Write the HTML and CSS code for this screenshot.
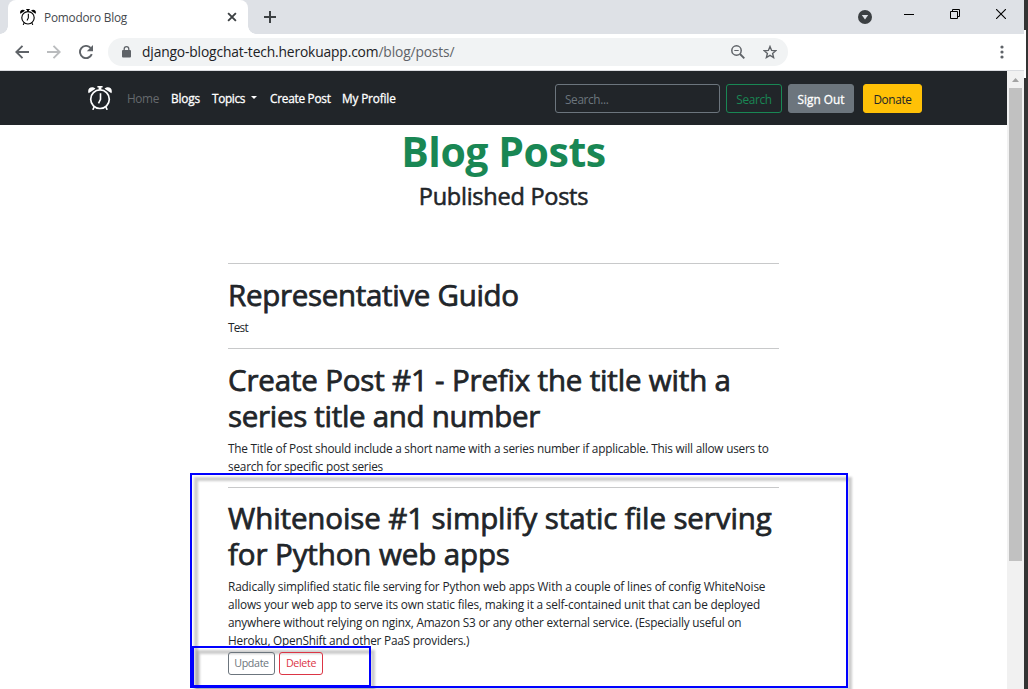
FILE: index.html
```
<!DOCTYPE html>
<html lang="en">
<head>
<meta charset="utf-8">
<title>Pomodoro Blog</title>
<link rel="stylesheet" href="styles.css">
</head>
<body>
<svg width="0" height="0" class="defs">
  <symbol id="clock" viewBox="0 0 24 24">
    <circle cx="12" cy="13.2" r="9.3" fill="none" stroke="currentColor" stroke-width="1.7"/>
    <path d="M9.400 0h5.200v1.600h-1.200v2h-2.800v-2H9.400zM.6 7.200C-.8 4 1.400 1.200 4.200 1.300c1.300 0 2.500.6 3.200 1.400zM23.400 7.200c1.400-3.200-.8-6-3.600-5.900-1.300 0-2.500.6-3.200 1.400z" fill="currentColor"/>
    <path d="M12.500 7.300v6l-2 4M6.200 20.800l-1.400 3M17.800 20.800l1.400 3" fill="none" stroke="currentColor" stroke-width="1.600"/>
  </symbol>
</svg>
<div class="screen">
  <div class="browser">
    <div class="tabstrip">
      <div class="tab">
        <svg class="favicon"><use href="#clock"/></svg>
        <span class="tab-title">Pomodoro Blog</span>
        <svg class="tab-close" viewBox="0 0 9 9"><path d="M1 1l7 7M8 1l-7 7" stroke="#3c4043" stroke-width="1.700"/></svg>
      </div>
      <svg class="new-tab" viewBox="0 0 12 12"><path d="M6 0v12M0 6h12" stroke="#3c4043" stroke-width="2"/></svg>
      <div class="window-controls">
        <svg width="14" height="14" viewBox="0 0 14 14"><circle cx="7" cy="7" r="7" fill="#3c4043"/><path d="M3.800 5h6.400L7 9.500z" fill="#dee1e6"/></svg>
        <svg class="minimize" width="10" height="10" viewBox="0 0 10 10"><path d="M0 5.500h10" stroke="#000"/></svg>
        <svg class="restore" width="10" height="10" viewBox="0 0 10 10"><path d="M.5 2.500h7v7h-7zM2.500 2.500v-2h7v7h-2" fill="none" stroke="#000"/></svg>
        <svg class="close" width="10" height="10" viewBox="0 0 10 10"><path d="M0 0l10 10M10 0L0 10" stroke="#000" stroke-width="1.100"/></svg>
      </div>
    </div>
    <div class="toolbar">
      <svg class="back" width="14" height="14" viewBox="0 0 14 14"><path d="M14 7H1.500M7.500 .8L1.300 7l6.200 6.200" fill="none" stroke="#5f6368" stroke-width="1.900"/></svg>
      <svg class="forward" width="14" height="14" viewBox="0 0 14 14"><path d="M0 7h12.500M6.500 .8L12.700 7l-6.200 6.200" fill="none" stroke="#babcbe" stroke-width="1.900"/></svg>
      <svg class="reload" width="14" height="14" viewBox="0 0 14 14"><path d="M12.800 9.200A6.100 6.100 0 1 1 11.600 2.900" fill="none" stroke="#5f6368" stroke-width="1.900"/><path d="M14 0v6.200H7.800z" fill="#5f6368"/></svg>
      <div class="address">
        <svg class="lock" width="9" height="12" viewBox="0 0 9 12"><path d="M2.200 5V3a2.300 2.300 0 0 1 4.600 0v2" fill="none" stroke="#5f6368" stroke-width="1.300"/><rect y="4" width="9" height="7.500" rx="1" fill="#5f6368"/></svg>
        <span class="url">django-blogchat-tech.herokuapp.com<span class="path">/blog/posts/</span></span>
        <svg class="zoom-out" width="14" height="14" viewBox="0 0 14 14"><circle cx="5.500" cy="5.500" r="4.700" fill="none" stroke="#5f6368" stroke-width="1.500"/><path d="M3.300 5.500h4.400" stroke="#5f6368"/><path d="M9 9l4.300 4.300" stroke="#5f6368" stroke-width="1.900"/></svg>
        <svg class="star" width="14" height="14" viewBox="0 0 14 14"><path d="M7 1.500l1.600 3.900 4.200.3-3.200 2.700 1 4.100L7 10.300l-3.600 2.200 1-4.100-3.200-2.700 4.200-.3z" fill="none" stroke="#5f6368" stroke-width="1.400"/></svg>
      </div>
      <svg class="menu" width="4" height="14" viewBox="0 0 4 14"><g fill="#5f6368"><circle cx="2" cy="2" r="1.600"/><circle cx="2" cy="7" r="1.600"/><circle cx="2" cy="12" r="1.600"/></g></svg>
    </div>
    <div class="viewport">
      <div class="page">
        <nav class="navbar">
          <svg class="brand"><use href="#clock"/></svg>
          <a class="link home">Home</a>
          <a class="link blogs">Blogs</a>
          <a class="link topics">Topics</a><i class="caret"></i>
          <a class="link create">Create Post</a>
          <a class="link profile">My Profile</a>
          <div class="actions">
            <div class="search-input">Search...</div>
            <div class="btn search-btn">Search</div>
            <div class="btn signout">Sign Out</div>
            <div class="btn donate">Donate</div>
          </div>
        </nav>
        <header class="heading">
          <h1>Blog Posts</h1>
          <h3>Published Posts</h3>
        </header>
        <main class="posts">
          <article class="post">
            <h2 class="guido">Representative Guido</h2>
            <p class="test">Test</p>
          </article>
          <article class="post">
            <h2>Create Post #1 - Prefix the title with a<br><span class="tight">series title and number</span></h2>
            <p>The Title of Post should include a short name with a series number if applicable. This will allow users to<br>search for specific post series</p>
          </article>
          <article class="post last">
            <h2 class="whitenoise">Whitenoise #1 simplify static file serving<br>for Python web apps</h2>
            <p class="summary">Radically simplified static file serving for Python web apps With a couple of lines of config WhiteNoise<br><span class="line-2">allows your web app to serve its own static files, making it a self-contained unit that can be deployed</span><br><span class="line-3">anywhere without relying on nginx, Amazon S3 or any other external service. (Especially useful on<br>Heroku, OpenShift and other PaaS providers.)</span></p>
            <div class="post-actions">
              <div class="small-btn update">Update</div>
              <div class="small-btn delete">Delete</div>
            </div>
          </article>
        </main>
      </div>
      <div class="scrollbar">
        <svg width="7" height="4" viewBox="0 0 7 4"><path d="M3.500 0L7 4H0z" fill="#a3a3a3"/></svg>
        <div class="thumb"></div>
      </div>
    </div>
  </div>
  <div class="backdrop"><div class="backdrop-gap"></div></div>
  <div class="callout callout-post"></div>
  <div class="callout callout-buttons"></div>
</div>
</body>
</html>
```
FILE: styles.css
```
* { box-sizing: border-box; }
body { margin: 0; overflow: hidden; background: #fff; color: #212529; font: 11.8px/18px "Open Sans", "Noto Sans", sans-serif; }
svg { flex: none; display: block; }
.defs { position: absolute; }
.screen { position: relative; display: flex; width: 1028px; height: 689px; overflow: hidden; }
.browser { width: 1024px; display: flex; flex-direction: column; }
.backdrop { width: 4px; background: #333; padding-top: 30px; }
.backdrop-gap { width: 2px; height: 48px; background: #fff; }

.tabstrip { height: 34px; flex: none; display: flex; align-items: flex-start; padding-left: 8px; background: #dee1e6; }
.tab { position: relative; width: 240px; height: 34px; display: flex; align-items: center; padding: 0 12px; border-radius: 8px 8px 0 0; background: #fff; }
.tab::before, .tab::after { content: ""; position: absolute; bottom: 0; width: 8px; height: 8px; }
.tab::before { left: -8px; background: radial-gradient(circle at 0 0, #dee1e6 7.5px, #fff 8px); }
.tab::after { right: -8px; background: radial-gradient(circle at 100% 0, #dee1e6 7.5px, #fff 8px); }
.favicon { width: 16px; height: 16px; color: #000; }
.tab-title { margin-left: 8px; color: #45494d; letter-spacing: -.2px; white-space: nowrap; }
.tab-close { width: 10px; height: 10px; margin-left: auto; margin-right: -1px; }
.new-tab { width: 12px; height: 12px; margin: 11px 0 0 16px; }
.window-controls { margin: 10px 18px 0 auto; display: flex; align-items: flex-start; }
.minimize { margin: -1px 0 0 32px; }
.restore { margin: -1px 0 0 36px; }
.close { margin: -1px 0 0 36px; }

.toolbar { height: 37px; flex: none; display: flex; align-items: center; padding: 0 20px 0 15px; border-bottom: 1px solid #dadce0; background: #fff; }
.forward { margin-left: 18px; }
.reload { margin-left: 18px; }
.address { width: 680px; height: 28px; margin-left: 15px; padding: 0 11px 0 14px; display: flex; align-items: center; border-radius: 14px; background: #f1f3f4; }
.url { margin: 0 auto 0 11px; font-size: 13.8px; letter-spacing: -.14px; color: #202124; white-space: nowrap; }
.path { color: #5f6368; }
.star { margin-left: 18px; }
.menu { margin-left: auto; }

.viewport { flex: 1; display: flex; min-height: 0; }
.page { width: 1007px; overflow: hidden; }
.scrollbar { width: 17px; background: #f1f1f1; display: flex; flex-direction: column; align-items: center; padding-top: 7px; }
.thumb { width: 13px; height: 473px; margin-top: 6px; background: #c1c1c1; }

.navbar { height: 54px; display: flex; align-items: center; padding: 0 85px 0 88px; background: #212529; color: #fff; }
.brand { width: 24px; height: 24px; color: #fff; }
.link { white-space: nowrap; -webkit-text-stroke: .3px; }
.home { width: 32px; margin-left: 15px; color: #666a6e; letter-spacing: -.35px; -webkit-text-stroke: 0; }
.blogs { width: 29px; margin-left: 12px; letter-spacing: -.15px; }
.topics { width: 33px; margin-left: 12px; letter-spacing: -.35px; }
.caret { margin: -2px 0 0 6px; border: 3.5px solid transparent; border-top-color: #fff; border-bottom: 0; }
.create { width: 60px; margin-left: 13px; letter-spacing: -.25px; }
.profile { margin-left: 12px; letter-spacing: -.15px; }
.actions { display: flex; margin-left: auto; }
.search-input, .btn { height: 29px; border: 1px solid #6c757d; border-radius: 3px; line-height: 28px; white-space: nowrap; }
.search-input { width: 165px; padding-left: 9px; color: #6c757d; letter-spacing: -.35px; }
.btn { text-align: center; letter-spacing: -.35px; }
.search-btn { width: 56px; margin-left: 6px; color: #198754; border-color: #198754; }
.signout { width: 66px; margin-left: 6px; background: #6c757d; letter-spacing: 0; -webkit-text-stroke: .3px; }
.donate { width: 59px; margin-left: 9px; background: #ffc107; border-color: #ffc107; color: #212529; }

.heading { height: 138px; padding-top: 2px; text-align: center; }
h1, h2, h3, p { margin: 0; white-space: nowrap; }
h1 { color: #198754; font-size: 41px; line-height: 49px; font-weight: 700; letter-spacing: -.45px; }
h3 { margin-top: 6px; font-size: 23.5px; line-height: 29px; font-weight: 400; letter-spacing: -.25px; -webkit-text-stroke: .55px; }
.posts { width: 551px; margin-left: 228px; }
.post { border-top: 1px solid #c8c9ca; padding: 13px 0 12px; }
.last { padding-top: 12px; }
h2 { font-size: 29.5px; line-height: 36px; font-weight: 400; letter-spacing: -.17px; -webkit-text-stroke: .75px; }
.tight { letter-spacing: -.3px; }
.whitenoise { letter-spacing: -.1px; }
.guido { letter-spacing: -.3px; }
p { margin-top: 5px; letter-spacing: -.22px; }
.test { letter-spacing: -.75px; }
.summary { letter-spacing: -.15px; }
.line-2 { letter-spacing: -.175px; }
.line-3 { letter-spacing: -.215px; }
.post-actions { display: flex; gap: 4px; margin-top: 3px; }
.small-btn { height: 23px; border: 1px solid; border-radius: 3px; line-height: 20px; font-size: 10.7px; text-align: center; letter-spacing: -.35px; }
.update { width: 47px; color: #6c757d; }
.delete { width: 44px; color: #dc3545; }

/* annotation frames drawn over the page */
.callout { position: absolute; border: 2px solid #00f; }
.callout::before { content: ""; position: absolute; left: 2px; top: 2px; right: -6px; bottom: -6px; border: 4px solid rgba(0, 0, 0, .2); filter: blur(1px); z-index: -1; }
.callout-post { left: 190px; top: 473px; width: 658px; height: 215px; }
.callout-buttons { left: 192px; top: 646px; width: 179px; height: 41px; }
```
